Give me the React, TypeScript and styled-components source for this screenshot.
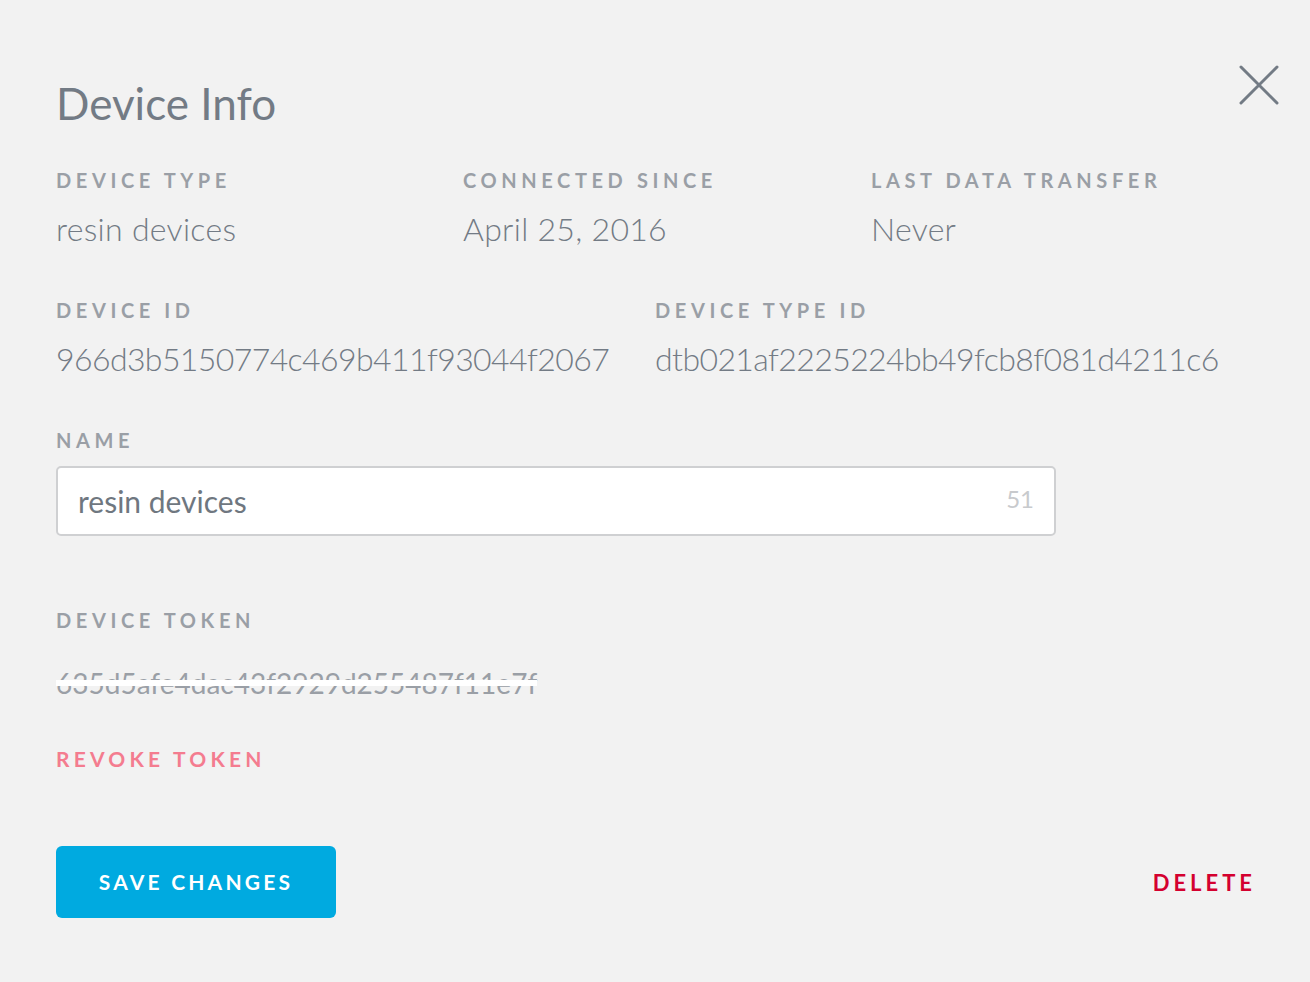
import React from "react";
import styled, { createGlobalStyle } from "styled-components";

const Global = createGlobalStyle`
  html, body { margin: 0; padding: 0; background: #f2f2f2; }
  body { font-family: Lato, "Noto Sans", sans-serif; -webkit-font-smoothing: antialiased; }
`;

const Page = styled.div`
  box-sizing: border-box;
  width: 1310px;
  height: 982px;
  background: #f2f2f2;
  padding: 72px 32px 0 56px;
  position: relative;
  display: flex;
  flex-direction: column;
`;

const Title = styled.h1`
  margin: 0;
  font-family: Lato, sans-serif;
  font-weight: 400;
  font-size: 44px;
  line-height: 62px;
  color: #737b85;
`;

const Close = styled.button`
  position: absolute;
  top: 64px;
  right: 30px;
  width: 42px;
  height: 42px;
  padding: 0;
  border: 0;
  background: transparent;
  cursor: pointer;
  display: flex;
  align-items: center;
  justify-content: center;
`;

const Row = styled.div<{ $top: number }>`
  display: flex;
  margin-top: ${(p) => p.$top}px;
`;

const Field = styled.div<{ $width?: number; $top?: number }>`
  display: flex;
  flex-direction: column;
  ${(p) => (p.$width ? `width: ${p.$width}px;` : "")}
  ${(p) => (p.$top ? `margin-top: ${p.$top}px;` : "")}
`;

const Label = styled.div`
  font-family: Lato, sans-serif;
  font-weight: 700;
  font-size: 20px;
  line-height: 24px;
  letter-spacing: 4.6px;
  color: #9a9fa6;
  text-transform: uppercase;
`;

const Value = styled.div<{ $mono?: boolean }>`
  margin-top: 17px;
  font-family: Lato, sans-serif;
  font-weight: 300;
  font-size: 32px;
  line-height: 40px;
  color: #737b85;
  white-space: nowrap;
  letter-spacing: ${(p) => (p.$mono ? "-0.6px" : "0.3px")};
`;

const InputBox = styled.div`
  box-sizing: border-box;
  margin-top: 14px;
  width: 1000px;
  height: 70px;
  border: 2px solid #cfd0d2;
  border-radius: 5px;
  background: #ffffff;
  display: flex;
  align-items: center;
  padding: 0 20px 0 20px;
`;

const Input = styled.input`
  flex: 1;
  border: 0;
  outline: none;
  background: transparent;
  font-family: Lato, sans-serif;
  font-weight: 400;
  font-size: 30px;
  color: #6f7780;
  padding: 0;
`;

const Counter = styled.span`
  font-family: Lato, sans-serif;
  font-weight: 400;
  font-size: 24px;
  color: #c8cacd;
  margin-top: -6px;
`;

const Token = styled.div`
  margin-top: 34px;
  font-family: Lato, sans-serif;
  font-weight: 400;
  font-size: 28px;
  line-height: 34px;
  color: #9a9fa6;
  position: relative;
  align-self: flex-start;
  white-space: nowrap;
`;

const TokenBar = styled.span`
  position: absolute;
  left: 0;
  right: 0;
  top: 14px;
  height: 6px;
  background: #ffffff;
`;

const LinkButton = styled.button<{ $color: string }>`
  padding: 0;
  border: 0;
  background: transparent;
  font-family: Lato, sans-serif;
  font-weight: 700;
  font-size: 22px;
  letter-spacing: 4px;
  color: ${(p) => p.$color};
  text-transform: uppercase;
  cursor: pointer;
  text-align: left;
`;

const Revoke = styled(LinkButton)`
  margin-top: 46px;
  align-self: flex-start;
  font-size: 21px;
  letter-spacing: 4.2px;
`;

const Footer = styled.div`
  margin-top: 75px;
  display: flex;
  align-items: center;
  justify-content: space-between;
  padding-right: 22px;
`;

const Primary = styled.button`
  width: 280px;
  height: 72px;
  border: 0;
  border-radius: 6px;
  background: #00aae0;
  color: #ffffff;
  font-family: Lato, sans-serif;
  font-weight: 700;
  font-size: 21px;
  letter-spacing: 3.2px;
  cursor: pointer;
  padding: 0 0 2px 0;
`;

export default function App() {
  return (
    <>
      <Global />
      <Page>
        <Title>Device Info</Title>
        <Close aria-label="Close">
          <svg width="40" height="40" viewBox="0 0 40 40">
            <path d="M2 2 L38 38 M38 2 L2 38" stroke="#737b85" strokeWidth="3" strokeLinecap="round" />
          </svg>
        </Close>

        <Row $top={34}>
          <Field $width={407}>
            <Label>Device Type</Label>
            <Value>resin devices</Value>
          </Field>
          <Field $width={408}>
            <Label>Connected Since</Label>
            <Value>April 25, 2016</Value>
          </Field>
          <Field>
            <Label>Last Data Transfer</Label>
            <Value>Never</Value>
          </Field>
        </Row>

        <Row $top={49}>
          <Field $width={599}>
            <Label>Device ID</Label>
            <Value $mono>966d3b5150774c469b411f93044f2067</Value>
          </Field>
          <Field>
            <Label>Device Type ID</Label>
            <Value $mono>dtb021af2225224bb49fcb8f081d4211c6</Value>
          </Field>
        </Row>

        <Field $top={49}>
          <Label>Name</Label>
          <InputBox>
            <Input defaultValue="resin devices" />
            <Counter>51</Counter>
          </InputBox>
        </Field>

        <Field $top={72}>
          <Label>Device Token</Label>
          <Token>
            635d5afe4dac43f2929d255487f11e7f
            <TokenBar />
          </Token>
        </Field>

        <Revoke $color="#f47c8f">Revoke Token</Revoke>

        <Footer>
          <Primary>SAVE CHANGES</Primary>
          <LinkButton $color="#d4002f">Delete</LinkButton>
        </Footer>
      </Page>
    </>
  );
}
